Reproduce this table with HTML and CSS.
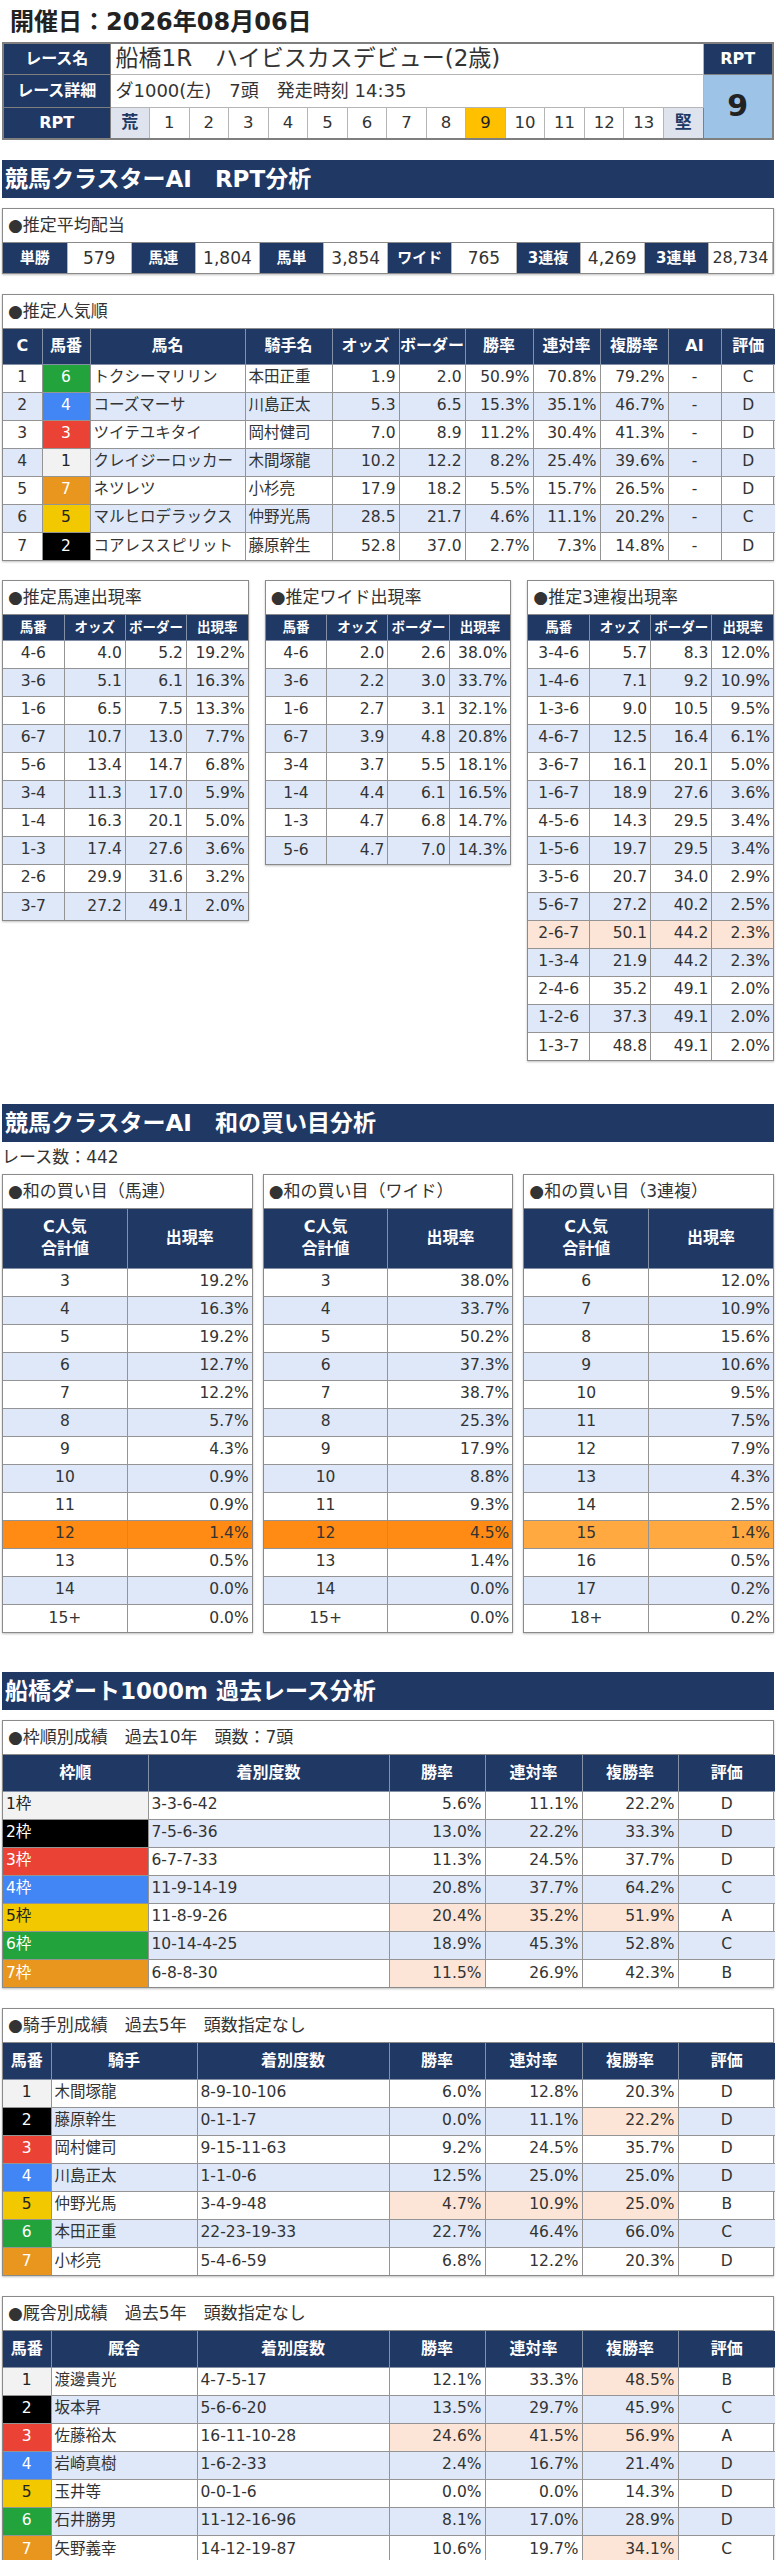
FILE: index.html
```html
<!DOCTYPE html>
<html lang="ja">
<head>
<meta charset="utf-8">
<title>船橋1R RPT分析</title>
<link rel="stylesheet" href="styles.css">
</head>
<body>
<div class="page">
  <h1 class="date">開催日：2026年08月06日</h1>

  <table class="race">
    <colgroup>
      <col class="c-lbl"><col span="15"><col class="c-rpt">
    </colgroup>
    <tr class="r1">
      <th class="lbl">レース名</th>
      <td class="name" colspan="15">船橋1R　ハイビスカスデビュー(2歳)</td>
      <th class="rpt-h">RPT</th>
    </tr>
    <tr class="r2">
      <th class="lbl">レース詳細</th>
      <td class="detail" colspan="15">ダ1000(左)　7頭　発走時刻 14:35</td>
      <td class="rpt-v" rowspan="2">9</td>
    </tr>
    <tr class="r3">
      <th class="lbl">RPT</th>
      <td class="sc end">荒</td><td class="sc">1</td><td class="sc">2</td><td class="sc">3</td><td class="sc">4</td><td class="sc">5</td><td class="sc">6</td><td class="sc">7</td><td class="sc">8</td><td class="sc cur">9</td><td class="sc">10</td><td class="sc">11</td><td class="sc">12</td><td class="sc">13</td><td class="sc end">堅</td>
    </tr>
  </table>

  <div class="band">競馬クラスターAI　RPT分析</div>

  <div class="box box-odds">
    <div class="box-title">●推定平均配当</div>
    <table class="odds">
      <tr>
        <th>単勝</th><td>579</td><th>馬連</th><td>1,804</td><th>馬単</th><td>3,854</td><th>ワイド</th><td>765</td><th>3連複</th><td>4,269</td><th>3連単</th><td class="tight">28,734</td>
      </tr>
    </table>
  </div>

  <div class="box box-pop">
    <div class="box-title">●推定人気順</div>
    <table class="grid pop">
      <colgroup>
        <col style="width:39px"><col style="width:48px"><col style="width:155px"><col style="width:87px"><col style="width:67px"><col style="width:66px"><col style="width:68px"><col style="width:67px"><col style="width:68px"><col style="width:53px"><col style="width:54px">
      </colgroup>
      <thead>
        <tr><th>C</th><th>馬番</th><th>馬名</th><th>騎手名</th><th>オッズ</th><th>ボーダー</th><th>勝率</th><th>連対率</th><th>複勝率</th><th>AI</th><th>評価</th></tr>
      </thead>
      <tbody>
        <tr><td class="c">1</td><td class="c w6">6</td><td class="l">トクシーマリリン</td><td class="l">本田正重</td><td class="r">1.9</td><td class="r">2.0</td><td class="r">50.9%</td><td class="r">70.8%</td><td class="r">79.2%</td><td class="c">-</td><td class="c">C</td></tr>
        <tr><td class="c">2</td><td class="c w4">4</td><td class="l">コーズマーサ</td><td class="l">川島正太</td><td class="r">5.3</td><td class="r">6.5</td><td class="r">15.3%</td><td class="r">35.1%</td><td class="r">46.7%</td><td class="c">-</td><td class="c">D</td></tr>
        <tr><td class="c">3</td><td class="c w3">3</td><td class="l">ツイテユキタイ</td><td class="l">岡村健司</td><td class="r">7.0</td><td class="r">8.9</td><td class="r">11.2%</td><td class="r">30.4%</td><td class="r">41.3%</td><td class="c">-</td><td class="c">D</td></tr>
        <tr><td class="c">4</td><td class="c w1">1</td><td class="l">クレイジーロッカー</td><td class="l">木間塚龍</td><td class="r">10.2</td><td class="r">12.2</td><td class="r">8.2%</td><td class="r">25.4%</td><td class="r">39.6%</td><td class="c">-</td><td class="c">D</td></tr>
        <tr><td class="c">5</td><td class="c w7">7</td><td class="l">ネツレツ</td><td class="l">小杉亮</td><td class="r">17.9</td><td class="r">18.2</td><td class="r">5.5%</td><td class="r">15.7%</td><td class="r">26.5%</td><td class="c">-</td><td class="c">D</td></tr>
        <tr><td class="c">6</td><td class="c w5">5</td><td class="l">マルヒロデラックス</td><td class="l">仲野光馬</td><td class="r">28.5</td><td class="r">21.7</td><td class="r">4.6%</td><td class="r">11.1%</td><td class="r">20.2%</td><td class="c">-</td><td class="c">C</td></tr>
        <tr><td class="c">7</td><td class="c w2">2</td><td class="l">コアレススピリット</td><td class="l">藤原幹生</td><td class="r">52.8</td><td class="r">37.0</td><td class="r">2.7%</td><td class="r">7.3%</td><td class="r">14.8%</td><td class="c">-</td><td class="c">D</td></tr>
      </tbody>
    </table>
  </div>

  <div class="tri tri-a">
    <div class="box">
      <div class="box-title">●推定馬連出現率</div>
      <table class="grid small">
        <thead><tr><th>馬番</th><th>オッズ</th><th>ボーダー</th><th>出現率</th></tr></thead>
        <tbody>
          <tr><td class="c">4-6</td><td class="r">4.0</td><td class="r">5.2</td><td class="r">19.2%</td></tr>
          <tr><td class="c">3-6</td><td class="r">5.1</td><td class="r">6.1</td><td class="r">16.3%</td></tr>
          <tr><td class="c">1-6</td><td class="r">6.5</td><td class="r">7.5</td><td class="r">13.3%</td></tr>
          <tr><td class="c">6-7</td><td class="r">10.7</td><td class="r">13.0</td><td class="r">7.7%</td></tr>
          <tr><td class="c">5-6</td><td class="r">13.4</td><td class="r">14.7</td><td class="r">6.8%</td></tr>
          <tr><td class="c">3-4</td><td class="r">11.3</td><td class="r">17.0</td><td class="r">5.9%</td></tr>
          <tr><td class="c">1-4</td><td class="r">16.3</td><td class="r">20.1</td><td class="r">5.0%</td></tr>
          <tr><td class="c">1-3</td><td class="r">17.4</td><td class="r">27.6</td><td class="r">3.6%</td></tr>
          <tr><td class="c">2-6</td><td class="r">29.9</td><td class="r">31.6</td><td class="r">3.2%</td></tr>
          <tr><td class="c">3-7</td><td class="r">27.2</td><td class="r">49.1</td><td class="r">2.0%</td></tr>
        </tbody>
      </table>
    </div>
    <div class="box">
      <div class="box-title">●推定ワイド出現率</div>
      <table class="grid small">
        <thead><tr><th>馬番</th><th>オッズ</th><th>ボーダー</th><th>出現率</th></tr></thead>
        <tbody>
          <tr><td class="c">4-6</td><td class="r">2.0</td><td class="r">2.6</td><td class="r">38.0%</td></tr>
          <tr><td class="c">3-6</td><td class="r">2.2</td><td class="r">3.0</td><td class="r">33.7%</td></tr>
          <tr><td class="c">1-6</td><td class="r">2.7</td><td class="r">3.1</td><td class="r">32.1%</td></tr>
          <tr><td class="c">6-7</td><td class="r">3.9</td><td class="r">4.8</td><td class="r">20.8%</td></tr>
          <tr><td class="c">3-4</td><td class="r">3.7</td><td class="r">5.5</td><td class="r">18.1%</td></tr>
          <tr><td class="c">1-4</td><td class="r">4.4</td><td class="r">6.1</td><td class="r">16.5%</td></tr>
          <tr><td class="c">1-3</td><td class="r">4.7</td><td class="r">6.8</td><td class="r">14.7%</td></tr>
          <tr><td class="c">5-6</td><td class="r">4.7</td><td class="r">7.0</td><td class="r">14.3%</td></tr>
        </tbody>
      </table>
    </div>
    <div class="box">
      <div class="box-title">●推定3連複出現率</div>
      <table class="grid small">
        <thead><tr><th>馬番</th><th>オッズ</th><th>ボーダー</th><th>出現率</th></tr></thead>
        <tbody>
          <tr><td class="c">3-4-6</td><td class="r">5.7</td><td class="r">8.3</td><td class="r">12.0%</td></tr>
          <tr><td class="c">1-4-6</td><td class="r">7.1</td><td class="r">9.2</td><td class="r">10.9%</td></tr>
          <tr><td class="c">1-3-6</td><td class="r">9.0</td><td class="r">10.5</td><td class="r">9.5%</td></tr>
          <tr><td class="c">4-6-7</td><td class="r">12.5</td><td class="r">16.4</td><td class="r">6.1%</td></tr>
          <tr><td class="c">3-6-7</td><td class="r">16.1</td><td class="r">20.1</td><td class="r">5.0%</td></tr>
          <tr><td class="c">1-6-7</td><td class="r">18.9</td><td class="r">27.6</td><td class="r">3.6%</td></tr>
          <tr><td class="c">4-5-6</td><td class="r">14.3</td><td class="r">29.5</td><td class="r">3.4%</td></tr>
          <tr><td class="c">1-5-6</td><td class="r">19.7</td><td class="r">29.5</td><td class="r">3.4%</td></tr>
          <tr><td class="c">3-5-6</td><td class="r">20.7</td><td class="r">34.0</td><td class="r">2.9%</td></tr>
          <tr><td class="c">5-6-7</td><td class="r">27.2</td><td class="r">40.2</td><td class="r">2.5%</td></tr>
          <tr class="pink"><td class="c">2-6-7</td><td class="r">50.1</td><td class="r">44.2</td><td class="r">2.3%</td></tr>
          <tr><td class="c">1-3-4</td><td class="r">21.9</td><td class="r">44.2</td><td class="r">2.3%</td></tr>
          <tr><td class="c">2-4-6</td><td class="r">35.2</td><td class="r">49.1</td><td class="r">2.0%</td></tr>
          <tr><td class="c">1-2-6</td><td class="r">37.3</td><td class="r">49.1</td><td class="r">2.0%</td></tr>
          <tr><td class="c">1-3-7</td><td class="r">48.8</td><td class="r">49.1</td><td class="r">2.0%</td></tr>
        </tbody>
      </table>
    </div>
  </div>

  <div class="band band-2">競馬クラスターAI　和の買い目分析</div>
  <div class="count">レース数：442</div>

  <div class="tri tri-b">
    <div class="box">
      <div class="box-title">●和の買い目（馬連）</div>
      <table class="grid sum">
        <thead><tr><th>C人気<br>合計値</th><th>出現率</th></tr></thead>
        <tbody>
          <tr><td class="c">3</td><td class="r">19.2%</td></tr>
          <tr><td class="c">4</td><td class="r">16.3%</td></tr>
          <tr><td class="c">5</td><td class="r">19.2%</td></tr>
          <tr><td class="c">6</td><td class="r">12.7%</td></tr>
          <tr><td class="c">7</td><td class="r">12.2%</td></tr>
          <tr><td class="c">8</td><td class="r">5.7%</td></tr>
          <tr><td class="c">9</td><td class="r">4.3%</td></tr>
          <tr><td class="c">10</td><td class="r">0.9%</td></tr>
          <tr><td class="c">11</td><td class="r">0.9%</td></tr>
          <tr class="hot"><td class="c">12</td><td class="r">1.4%</td></tr>
          <tr><td class="c">13</td><td class="r">0.5%</td></tr>
          <tr><td class="c">14</td><td class="r">0.0%</td></tr>
          <tr><td class="c">15+</td><td class="r">0.0%</td></tr>
        </tbody>
      </table>
    </div>
    <div class="box">
      <div class="box-title">●和の買い目（ワイド）</div>
      <table class="grid sum">
        <thead><tr><th>C人気<br>合計値</th><th>出現率</th></tr></thead>
        <tbody>
          <tr><td class="c">3</td><td class="r">38.0%</td></tr>
          <tr><td class="c">4</td><td class="r">33.7%</td></tr>
          <tr><td class="c">5</td><td class="r">50.2%</td></tr>
          <tr><td class="c">6</td><td class="r">37.3%</td></tr>
          <tr><td class="c">7</td><td class="r">38.7%</td></tr>
          <tr><td class="c">8</td><td class="r">25.3%</td></tr>
          <tr><td class="c">9</td><td class="r">17.9%</td></tr>
          <tr><td class="c">10</td><td class="r">8.8%</td></tr>
          <tr><td class="c">11</td><td class="r">9.3%</td></tr>
          <tr class="hot"><td class="c">12</td><td class="r">4.5%</td></tr>
          <tr><td class="c">13</td><td class="r">1.4%</td></tr>
          <tr><td class="c">14</td><td class="r">0.0%</td></tr>
          <tr><td class="c">15+</td><td class="r">0.0%</td></tr>
        </tbody>
      </table>
    </div>
    <div class="box">
      <div class="box-title">●和の買い目（3連複）</div>
      <table class="grid sum">
        <thead><tr><th>C人気<br>合計値</th><th>出現率</th></tr></thead>
        <tbody>
          <tr><td class="c">6</td><td class="r">12.0%</td></tr>
          <tr><td class="c">7</td><td class="r">10.9%</td></tr>
          <tr><td class="c">8</td><td class="r">15.6%</td></tr>
          <tr><td class="c">9</td><td class="r">10.6%</td></tr>
          <tr><td class="c">10</td><td class="r">9.5%</td></tr>
          <tr><td class="c">11</td><td class="r">7.5%</td></tr>
          <tr><td class="c">12</td><td class="r">7.9%</td></tr>
          <tr><td class="c">13</td><td class="r">4.3%</td></tr>
          <tr><td class="c">14</td><td class="r">2.5%</td></tr>
          <tr class="warm"><td class="c">15</td><td class="r">1.4%</td></tr>
          <tr><td class="c">16</td><td class="r">0.5%</td></tr>
          <tr><td class="c">17</td><td class="r">0.2%</td></tr>
          <tr><td class="c">18+</td><td class="r">0.2%</td></tr>
        </tbody>
      </table>
    </div>
  </div>

  <div class="band band-3">船橋ダート1000m 過去レース分析</div>

  <div class="box box-past">
    <div class="box-title">●枠順別成績　過去10年　頭数：7頭</div>
    <table class="grid past">
      <colgroup>
        <col style="width:145px"><col style="width:241px"><col style="width:96px"><col style="width:97px"><col style="width:96px"><col style="width:97px">
      </colgroup>
      <thead><tr><th>枠順</th><th>着別度数</th><th>勝率</th><th>連対率</th><th>複勝率</th><th>評価</th></tr></thead>
      <tbody>
        <tr><td class="l w1">1枠</td><td class="l">3-3-6-42</td><td class="r">5.6%</td><td class="r">11.1%</td><td class="r">22.2%</td><td class="c">D</td></tr>
        <tr><td class="l w2">2枠</td><td class="l">7-5-6-36</td><td class="r">13.0%</td><td class="r">22.2%</td><td class="r">33.3%</td><td class="c">D</td></tr>
        <tr><td class="l w3">3枠</td><td class="l">6-7-7-33</td><td class="r">11.3%</td><td class="r">24.5%</td><td class="r">37.7%</td><td class="c">D</td></tr>
        <tr><td class="l w4">4枠</td><td class="l">11-9-14-19</td><td class="r">20.8%</td><td class="r">37.7%</td><td class="r">64.2%</td><td class="c">C</td></tr>
        <tr><td class="l w5">5枠</td><td class="l">11-8-9-26</td><td class="r pk">20.4%</td><td class="r pk">35.2%</td><td class="r pk">51.9%</td><td class="c">A</td></tr>
        <tr><td class="l w6">6枠</td><td class="l">10-14-4-25</td><td class="r">18.9%</td><td class="r">45.3%</td><td class="r">52.8%</td><td class="c">C</td></tr>
        <tr><td class="l w7">7枠</td><td class="l">6-8-8-30</td><td class="r pk">11.5%</td><td class="r">26.9%</td><td class="r">42.3%</td><td class="c">B</td></tr>
      </tbody>
    </table>
  </div>

  <div class="box box-past">
    <div class="box-title">●騎手別成績　過去5年　頭数指定なし</div>
    <table class="grid past">
      <colgroup>
        <col style="width:48px"><col style="width:146px"><col style="width:192px"><col style="width:96px"><col style="width:97px"><col style="width:96px"><col style="width:97px">
      </colgroup>
      <thead><tr><th>馬番</th><th>騎手</th><th>着別度数</th><th>勝率</th><th>連対率</th><th>複勝率</th><th>評価</th></tr></thead>
      <tbody>
        <tr><td class="c w1">1</td><td class="l">木間塚龍</td><td class="l">8-9-10-106</td><td class="r">6.0%</td><td class="r">12.8%</td><td class="r">20.3%</td><td class="c">D</td></tr>
        <tr><td class="c w2">2</td><td class="l">藤原幹生</td><td class="l">0-1-1-7</td><td class="r">0.0%</td><td class="r">11.1%</td><td class="r pk">22.2%</td><td class="c">D</td></tr>
        <tr><td class="c w3">3</td><td class="l">岡村健司</td><td class="l">9-15-11-63</td><td class="r">9.2%</td><td class="r">24.5%</td><td class="r">35.7%</td><td class="c">D</td></tr>
        <tr><td class="c w4">4</td><td class="l">川島正太</td><td class="l">1-1-0-6</td><td class="r">12.5%</td><td class="r">25.0%</td><td class="r">25.0%</td><td class="c">D</td></tr>
        <tr><td class="c w5">5</td><td class="l">仲野光馬</td><td class="l">3-4-9-48</td><td class="r pk">4.7%</td><td class="r pk">10.9%</td><td class="r pk">25.0%</td><td class="c">B</td></tr>
        <tr><td class="c w6">6</td><td class="l">本田正重</td><td class="l">22-23-19-33</td><td class="r">22.7%</td><td class="r">46.4%</td><td class="r">66.0%</td><td class="c">C</td></tr>
        <tr><td class="c w7">7</td><td class="l">小杉亮</td><td class="l">5-4-6-59</td><td class="r">6.8%</td><td class="r">12.2%</td><td class="r">20.3%</td><td class="c">D</td></tr>
      </tbody>
    </table>
  </div>

  <div class="box box-past">
    <div class="box-title">●厩舎別成績　過去5年　頭数指定なし</div>
    <table class="grid past">
      <colgroup>
        <col style="width:48px"><col style="width:146px"><col style="width:192px"><col style="width:96px"><col style="width:97px"><col style="width:96px"><col style="width:97px">
      </colgroup>
      <thead><tr><th>馬番</th><th>厩舎</th><th>着別度数</th><th>勝率</th><th>連対率</th><th>複勝率</th><th>評価</th></tr></thead>
      <tbody>
        <tr><td class="c w1">1</td><td class="l">渡邊貴光</td><td class="l">4-7-5-17</td><td class="r">12.1%</td><td class="r">33.3%</td><td class="r pk">48.5%</td><td class="c">B</td></tr>
        <tr><td class="c w2">2</td><td class="l">坂本昇</td><td class="l">5-6-6-20</td><td class="r">13.5%</td><td class="r">29.7%</td><td class="r">45.9%</td><td class="c">C</td></tr>
        <tr><td class="c w3">3</td><td class="l">佐藤裕太</td><td class="l">16-11-10-28</td><td class="r pk">24.6%</td><td class="r pk">41.5%</td><td class="r pk">56.9%</td><td class="c">A</td></tr>
        <tr><td class="c w4">4</td><td class="l">岩崎真樹</td><td class="l">1-6-2-33</td><td class="r">2.4%</td><td class="r">16.7%</td><td class="r">21.4%</td><td class="c">D</td></tr>
        <tr><td class="c w5">5</td><td class="l">玉井等</td><td class="l">0-0-1-6</td><td class="r">0.0%</td><td class="r">0.0%</td><td class="r">14.3%</td><td class="c">D</td></tr>
        <tr><td class="c w6">6</td><td class="l">石井勝男</td><td class="l">11-12-16-96</td><td class="r">8.1%</td><td class="r">17.0%</td><td class="r">28.9%</td><td class="c">D</td></tr>
        <tr><td class="c w7">7</td><td class="l">矢野義幸</td><td class="l">14-12-19-87</td><td class="r">10.6%</td><td class="r">19.7%</td><td class="r pk">34.1%</td><td class="c">C</td></tr>
      </tbody>
    </table>
  </div>
</div>
</body>
</html>
```

FILE: styles.css
```css
* { box-sizing: border-box; }

html, body {
  margin: 0;
  padding: 0;
  background: #ffffff;
}

body {
  font-family: "DejaVu Sans", "Noto Sans CJK JP", sans-serif;
  font-size: 15.5px;
  line-height: 1.2;
  color: #333333;
}

.page {
  width: 776px;
  padding: 0 2px;
}

/* ---------- date ---------- */
.date {
  margin: 0;
  height: 42px;
  padding: 0 0 0 8px;
  font-size: 24px;
  font-weight: bold;
  line-height: 44px;
  color: #222222;
}

/* ---------- race header ---------- */
.race {
  width: 100%;
  border-collapse: collapse;
  table-layout: fixed;
  border: 2px solid #7f7f7f;
}
.race .c-lbl { width: 107px; }
.race .c-rpt { width: 70px; }
.race th,
.race td {
  padding: 0;
  border: 1px solid #b5b5b5;
  white-space: nowrap;
  overflow: hidden;
  line-height: 1;
}
.race .r1 { height: 31px; }
.race .r2 { height: 33px; }
.race .r3 { height: 32px; }
.race .lbl {
  background: #203864;
  color: #ffffff;
  font-size: 16px;
  font-weight: bold;
  border-color: #7f7f7f;
}
.race .name {
  font-size: 23px;
  padding-left: 5px;
  text-align: left;
}
.race .detail {
  font-size: 18px;
  padding-left: 5px;
  text-align: left;
}
.race .sc {
  text-align: center;
  font-size: 16.5px;
}
.race .sc.end {
  background: #dfe3ee;
  color: #203864;
  font-weight: bold;
  font-size: 17px;
}
.race .sc.cur {
  background: #ffc000;
  color: #222222;
}
.race .rpt-h {
  background: #203864;
  color: #ffffff;
  font-size: 16px;
  font-weight: bold;
  border-color: #7f7f7f;
}
.race .rpt-v {
  background: #9dc3e6;
  text-align: center;
  font-size: 30px;
  font-weight: bold;
  color: #222222;
  border-color: #7f7f7f;
}

/* ---------- section bands ---------- */
.band {
  margin-top: 20px;
  height: 38px;
  padding-left: 3px;
  background: #203864;
  color: #ffffff;
  font-size: 23px;
  font-weight: bold;
  line-height: 38px;
  white-space: nowrap;
}
.band-2 { margin-top: 43px; }
.band-3 { margin-top: 39px; }

.count {
  height: 32px;
  font-size: 17px;
  line-height: 30px;
}

/* ---------- boxes ---------- */
.box {
  border: 1px solid #8a8a8a;
  background: #ffffff;
  box-shadow: 0 1px 2px rgba(0, 0, 0, 0.25);
}
.box-odds { margin-top: 10px; }
.box-pop { margin-top: 20px; }
.box-past { margin-top: 20px; }
.band-3 + .box-past { margin-top: 10px; }

.box-title {
  height: 34px;
  padding-left: 5px;
  border-bottom: 1px solid #8a8a8a;
  font-size: 17px;
  line-height: 33px;
  white-space: nowrap;
  color: #333333;
}

/* ---------- odds ---------- */
.odds {
  width: 100%;
  border-collapse: collapse;
  table-layout: fixed;
}
.odds tr { height: 30px; }
.odds th,
.odds td {
  padding: 0;
  text-align: center;
  white-space: nowrap;
  line-height: 1;
}
.odds th {
  background: #203864;
  color: #ffffff;
  font-size: 15px;
  font-weight: bold;
}
.odds td {
  font-size: 17px;
  border-left: 1px solid #b5b5b5;
  border-right: 1px solid #b5b5b5;
}
.odds td.tight { font-size: 16px; }

/* ---------- generic data grid ---------- */
.grid {
  width: 100%;
  border-collapse: collapse;
  table-layout: fixed;
  border-style: hidden;
}
.grid th,
.grid td {
  border: 1px solid #949494;
  padding: 0 3px;
  white-space: nowrap;
  overflow: hidden;
  line-height: 1;
}
.grid th {
  background: #203864;
  color: #ffffff;
  font-weight: bold;
  font-size: 16px;
  text-align: center;
  border-color: #8390a6;
}
.grid td { font-size: 15.5px; }
.grid tbody tr { height: 28px; }
.grid tbody tr:nth-child(even) td { background: #dee8f9; }

.grid .c { text-align: center; }
.grid .l { text-align: left; }
.grid .r { text-align: right; }

.pop thead tr { height: 35px; }
.pop th { padding: 0; }

.small thead tr { height: 25px; }
.small th {
  font-size: 13.5px;
  padding: 0;
}

.sum thead tr { height: 59px; }
.sum th { line-height: 22px; }

.past thead tr { height: 36px; }

/* highlights */
.grid tbody tr.pink td { background: #fce4d6; }
.grid tbody tr.hot td { background: #ff8a14; }
.grid tbody tr.warm td { background: #ffa940; }
.grid tbody tr td.pk { background: #fce4d6; }

/* waku colours */
.grid tbody tr td.w1 { background: #f2f2f2; color: #222222; }
.grid tbody tr td.w2 { background: #000000; color: #ffffff; }
.grid tbody tr td.w3 { background: #ea4335; color: #ffffff; }
.grid tbody tr td.w4 { background: #4285f4; color: #ffffff; }
.grid tbody tr td.w5 { background: #f2c800; color: #222222; }
.grid tbody tr td.w6 { background: #22a33b; color: #ffffff; }
.grid tbody tr td.w7 { background: #e8961d; color: #ffffff; }

/* ---------- three column groups ---------- */
.tri {
  display: grid;
  grid-template-columns: repeat(3, 1fr);
  align-items: start;
}
.tri-a {
  margin-top: 19px;
  column-gap: 16px;
}
.tri-b {
  column-gap: 10px;
}
```
